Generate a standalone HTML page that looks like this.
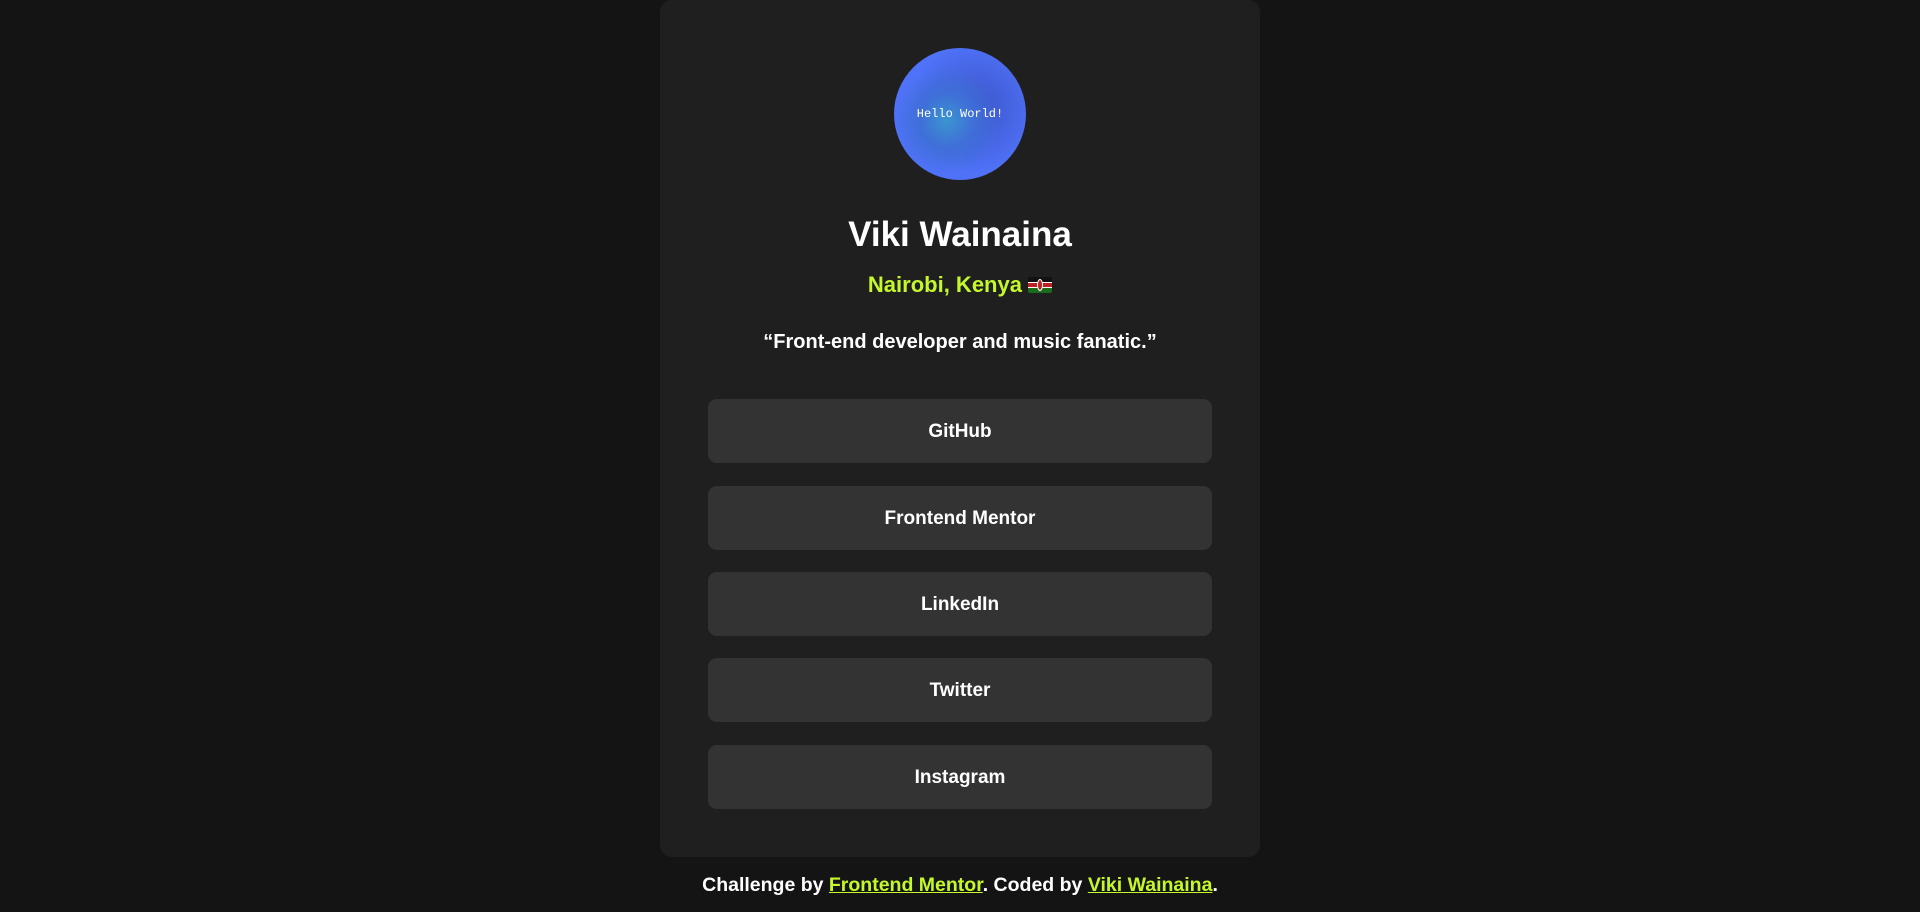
<!DOCTYPE html>
<html><head><meta charset="utf-8"><style>
body{margin:0;background:#141414;width:1920px;height:912px;font-family:"Liberation Sans",sans-serif;color:#fff;overflow:hidden}
.card{position:absolute;left:660px;top:0;width:600px;height:857px;background:#1f1f1f;border-radius:12px}
.av{position:absolute;left:234px;top:48px;width:132px;height:132px;border-radius:50%;background:radial-gradient(circle at 40% 55%,#3a95cf 0%,#3f6fd8 25%,transparent 50%),radial-gradient(circle at 62% 45%,#3c55c8 0%,#4f72f8 60%);display:flex;align-items:center;justify-content:center;font-family:"Liberation Mono",monospace;font-size:12px;color:#fff}
.name{position:absolute;top:215px;width:100%;text-align:center;font-size:35px;font-weight:bold}
.loc{position:absolute;top:272px;width:100%;text-align:center;font-size:22px;font-weight:bold;color:#c4f82a}
.flag{display:inline-block;width:24px;height:16px;vertical-align:-1px;border-radius:2px;background:linear-gradient(#111 0 30%,#fff 30% 36%,#b22 36% 64%,#fff 64% 70%,#1a6b1a 70%);position:relative}
.flag:after{content:"";position:absolute;left:9px;top:2px;width:6px;height:12px;border-radius:50%;background:#b22;border:1px solid #fff;box-sizing:border-box}
.q{position:absolute;top:331px;width:100%;text-align:center;font-size:20px;font-weight:bold}
.btn{position:absolute;left:48px;width:504px;height:64px;background:#333;border-radius:9px;text-align:center;line-height:66px;font-size:19px;font-weight:bold}
.foot{position:absolute;top:874px;width:100%;text-align:center;font-size:19.5px;font-weight:bold}
.foot a{color:#c4f82a;text-decoration:underline}
</style></head><body>
<div class="card">
<div class="av">Hello World!</div>
<div class="name">Viki Wainaina</div>
<div class="loc">Nairobi, Kenya <span class="flag"></span></div>
<div class="q">“Front-end developer and music fanatic.”</div>
<div class="btn" style="top:399px">GitHub</div>
<div class="btn" style="top:486px">Frontend Mentor</div>
<div class="btn" style="top:572px">LinkedIn</div>
<div class="btn" style="top:658px">Twitter</div>
<div class="btn" style="top:745px">Instagram</div>
</div>
<div class="foot">Challenge by <a>Frontend Mentor</a>. Coded by <a>Viki Wainaina</a>.</div>
</body></html>
